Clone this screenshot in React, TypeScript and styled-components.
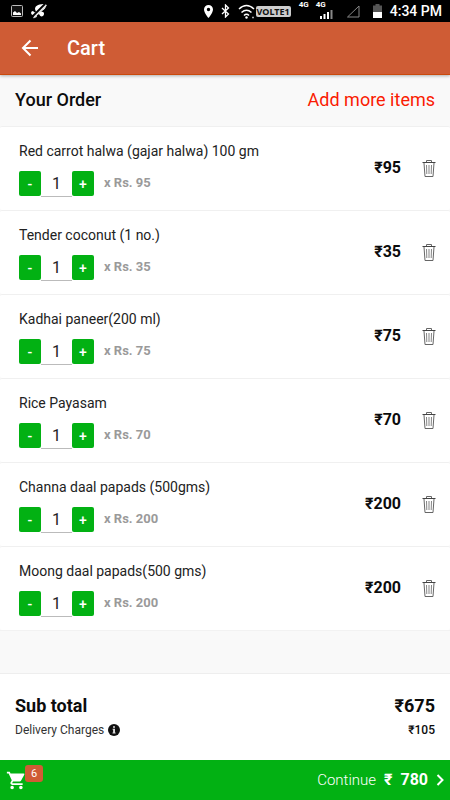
import React, { useState } from "react";
import styled, { createGlobalStyle } from "styled-components";

const green = "#02b113";
const orange = "#cf5c35";

const GlobalStyle = createGlobalStyle`
  *, *::before, *::after { box-sizing: border-box; }
  body {
    margin: 0;
    background: #f9f9f9;
    color: #0c0c0c;
    font-family: Roboto, "Noto Sans", sans-serif;
  }
  button, input { font-family: inherit; margin: 0; padding: 0; border: 0; }
  button { cursor: pointer; }
`;

const Screen = styled.div`
  display: flex;
  flex-direction: column;
  min-height: 100vh;
`;

const StatusBar = styled.div`
  display: flex;
  align-items: center;
  justify-content: space-between;
  height: 22px;
  padding: 0 8px 0 11px;
  background: #000;
  color: #fff;
`;

const StatusGroup = styled.div<{ $gap: number }>`
  display: flex;
  align-items: center;
  gap: ${(p) => p.$gap}px;

  svg { display: block; }
`;

const Volte = styled.span`
  padding: 0 1px;
  border-radius: 2px;
  background: #ccc;
  color: #111;
  font: 700 9px/11px "Noto Sans", sans-serif;
`;

const Network = styled.span`
  align-self: flex-start;
  font-size: 8px;
  font-weight: 700;
  line-height: 10px;
`;

const SignalStack = styled.div`
  display: flex;
  flex-direction: column;
  align-self: flex-start;
  width: 17px;

  svg { align-self: flex-end; }
`;

const SignalGroup = styled.div`
  display: flex;
  align-items: center;
  gap: 7px;
  height: 22px;
`;

const Clock = styled.time`
  font-size: 14px;
  font-weight: 500;
  line-height: 20px;
`;

const AppBar = styled.header`
  position: relative;
  display: flex;
  align-items: center;
  gap: 28px;
  height: 53px;
  padding: 0 21px;
  background: ${orange};
  border-bottom: 1px solid #cb4a0c;
  box-shadow: 0 1px 3px rgba(0, 0, 0, 0.3);
  color: #fff;
`;

const IconButton = styled.button`
  display: flex;
  background: none;
  color: inherit;
`;

const PageTitle = styled.h1`
  margin: 0;
  font-size: 20px;
  font-weight: 500;
  line-height: 24px;
`;

const OrderHeader = styled.div`
  display: flex;
  align-items: center;
  justify-content: space-between;
  height: 51px;
  padding: 0 15px 2px;
`;

const SectionTitle = styled.h2`
  margin: 0;
  font-size: 18px;
  font-weight: 500;
  line-height: 24px;
`;

const AddLink = styled.a`
  color: #fa1b02;
  font-size: 18px;
  line-height: 24px;
  text-decoration: none;
`;

const ItemList = styled.ul`
  margin: 0;
  padding: 0;
  list-style: none;
  border-bottom: 1px solid #f2f2f2;
`;

const Item = styled.li`
  display: flex;
  align-items: center;
  height: 84px;
  padding: 0 14px 0 19px;
  background: #fff;
  border-top: 1px solid #f0f0f0;
  border-radius: 2px;
`;

const ItemInfo = styled.div`
  flex: 1;
  min-width: 0;
`;

const ItemName = styled.div`
  font-size: 14px;
  line-height: 20px;
  color: #222;
`;

const QuantityRow = styled.div`
  display: flex;
  align-items: center;
  margin-top: 10px;
`;

const StepButton = styled.button`
  width: 22px;
  height: 25px;
  border-radius: 2px;
  background: ${green};
  color: #fff;
  font-size: 14px;
  font-weight: 500;
  line-height: 24px;
`;

const QuantityInput = styled.input`
  width: 31px;
  height: 26px;
  padding-top: 1px;
  background: #fff;
  border-bottom: 1px solid #bbb;
  border-radius: 0;
  color: #222;
  font-size: 16px;
  text-align: center;
  outline: none;
`;

const UnitPrice = styled.span`
  margin-left: 10px;
  padding-bottom: 2px;
  color: #9a9a9a;
  font-size: 13px;
  font-weight: 700;
  line-height: 20px;
`;

const LineTotal = styled.span`
  margin-right: 21px;
  padding-bottom: 2px;
  font-size: 16px;
  font-weight: 700;
  line-height: 20px;
`;

const Summary = styled.section`
  display: flex;
  flex-direction: column;
  gap: 2px;
  height: 87px;
  margin-top: auto;
  padding: 20px 15px 0;
  background: #fff;
  border-top: 1px solid #eee;
`;

const SummaryRow = styled.div<{ $large?: boolean }>`
  display: flex;
  align-items: center;
  justify-content: space-between;
  font-size: ${(p) => (p.$large ? 18 : 12)}px;
  font-weight: ${(p) => (p.$large ? 700 : 400)};
  line-height: ${(p) => (p.$large ? 24 : 20)}px;
`;

const ChargeLabel = styled.span`
  display: flex;
  align-items: center;
  gap: 4px;
  color: #333;
`;

const Amount = styled.span`
  font-weight: 500;
`;

const CheckoutBar = styled.footer`
  display: flex;
  align-items: center;
  justify-content: space-between;
  height: 40px;
  padding: 0 6px;
  background: ${green};
  color: #fff;
`;

const CartButton = styled(IconButton)`
  position: relative;
`;

const Badge = styled.span`
  position: absolute;
  left: 19px;
  top: -5px;
  width: 18px;
  height: 17px;
  border-radius: 3px;
  background: ${orange};
  color: #fff;
  font-size: 11px;
  line-height: 18px;
  text-align: center;
`;

const ContinueButton = styled.button`
  display: flex;
  align-items: center;
  gap: 8px;
  background: none;
  color: #fff;
  font-size: 16px;
  line-height: 24px;
`;

const ContinueLabel = styled.span`
  font-size: 15px;
  font-weight: 300;
`;

const Strong = styled.strong`
  font-weight: 700;
`;

const BackIcon = () => (
  <svg width="18" height="18" viewBox="0 0 18 18" fill="none" stroke="currentColor" strokeWidth="2">
    <path d="M17 9H3M9.500 1.500 2 9l7.500 7.500" />
  </svg>
);

const TrashIcon = () => (
  <svg width="14" height="18" viewBox="0 0 14 18" fill="none" stroke="#666" strokeWidth="1">
    <path d="M.5 2.500h13" stroke="#444" />
    <path d="M4.500 2V.5h5V2M2 3l1 13.500h8L12 3" />
    <path d="M4.500 5l.3 9M7 5v9M9.500 5l-.3 9" strokeWidth=".8" />
  </svg>
);

const CartIcon = () => (
  <svg width="21" height="21" viewBox="0 0 24 24" fill="currentColor">
    <path d="M7 18c-1.100 0-2 .9-2 2s.9 2 2 2 2-.9 2-2-.9-2-2-2zM1 2v2h2l3.600 7.590-1.350 2.450C4.520 15.370 5.480 17 7 17h12v-2H7.420c-.14 0-.25-.11-.25-.25l.03-.12.900-1.630h7.450c.75 0 1.410-.41 1.750-1.030l3.580-6.490A1 1 0 0 0 20 4H5.210l-.94-2H1zm16 16c-1.100 0-2 .9-2 2s.9 2 2 2 2-.9 2-2-.9-2-2-2z" />
  </svg>
);

const InfoIcon = () => (
  <svg width="12" height="12" viewBox="0 0 12 12">
    <circle cx="6" cy="6" r="6" fill="#111" />
    <path d="M5 2.300h2v1.500H5zM4.600 4.700H7v3.700h.6v1H4.500v-1h.6V5.700h-.5z" fill="#ddd" />
  </svg>
);

const ChevronIcon = () => (
  <svg width="8" height="12" viewBox="0 0 8 12" fill="none" stroke="currentColor" strokeWidth="2">
    <path d="M1.500 1 6.500 6l-5 5" />
  </svg>
);

const PictureIcon = () => (
  <svg width="12" height="12" viewBox="0 0 12 12">
    <rect x=".5" y=".5" width="11" height="11" rx="1" fill="#111" stroke="#bbb" />
    <path d="M2 10V7.500L4 6l2 2 2-1 2 1.500V10z" fill="#fff" />
  </svg>
);

const MutedIcon = () => (
  <svg width="16" height="15" viewBox="0 0 16 15">
    <path d="M4 5C4 1 9 0 14 0c2 1 1 5-3 7l-1 1c3-1 4 2 2 4-2 1-3 0-4-2l-2 1c0 3-2 3-3 2 0-1 0-2-1-2-3-1-2-4 0-4 1 1 2 2 3 1z" fill="#fff" />
    <path d="M14 0 1 13" stroke="#000" strokeWidth="2" />
    <path d="M15.500 1 2.500 14" stroke="#ddd" strokeWidth="1.200" />
  </svg>
);

const PinIcon = () => (
  <svg width="9" height="13" viewBox="0 0 9 13">
    <path fillRule="evenodd" d="M4.500 0A4.500 4.500 0 0 0 0 4.500C0 8 4.500 13 4.500 13S9 8 9 4.500A4.500 4.500 0 0 0 4.500 0zm0 2.800a1.700 1.700 0 1 1 0 3.400 1.700 1.700 0 0 1 0-3.400z" fill="#fff" />
  </svg>
);

const BluetoothIcon = () => (
  <svg width="9" height="14" viewBox="0 0 9 14" fill="none" stroke="#fff" strokeWidth="1.300">
    <path d="M1 4l6.500 6L4.500 13V1l3 3L1 10" />
  </svg>
);

const WifiIcon = () => (
  <svg width="17" height="15" viewBox="0 0 17 15" fill="none" stroke="#fff" strokeWidth="1.500">
    <path d="M1 5Q8.500-2 16 5M3.500 8.500Q8.500 4 13.500 8.500M6 11.500q2.500-2.500 5 0" />
    <circle cx="8.500" cy="13.500" r="1.200" fill="#fff" stroke="none" />
    <path d="M14 13.500h2" stroke="#aaa" />
  </svg>
);

const BarsIcon = () => (
  <svg width="13" height="9" viewBox="0 0 13 9">
    <path d="M0 6h2v3H0zM3.500 4h2v5h-2zM7 2h2v7H7z" fill="#fff" />
    <path d="M10.500 0h2v9h-2z" fill="#888" />
  </svg>
);

const NoSignalIcon = () => (
  <svg width="14" height="13" viewBox="0 0 14 13" fill="none" stroke="#888">
    <path d="M1.500 12 13 1v11z" />
  </svg>
);

const BatteryIcon = () => (
  <svg width="9" height="14" viewBox="0 0 9 14">
    <path d="M2.500 0h4v1.500H9V8H0V1.500h2.500z" fill="#555" />
    <path d="M0 8h9v6H0z" fill="#fff" />
  </svg>
);

const products = [
  { name: "Red carrot halwa (gajar halwa) 100 gm", price: 95 },
  { name: "Tender coconut (1 no.)", price: 35 },
  { name: "Kadhai paneer(200 ml)", price: 75 },
  { name: "Rice Payasam", price: 70 },
  { name: "Channa daal papads (500gms)", price: 200 },
  { name: "Moong daal papads(500 gms)", price: 200 },
];

const deliveryCharge = 105;

export default function App() {
  const [items, setItems] = useState(products.map((p) => ({ ...p, quantity: 1 })));
  const subTotal = items.reduce((sum, item) => sum + item.price * item.quantity, 0);

  const setQuantity = (name: string, quantity: number) =>
    setItems((list) =>
      list.map((item) => (item.name === name ? { ...item, quantity: Math.max(1, quantity || 1) } : item))
    );
  const remove = (name: string) => setItems((list) => list.filter((item) => item.name !== name));

  return (
    <Screen>
      <GlobalStyle />
      <StatusBar>
        <StatusGroup $gap={8}>
          <PictureIcon />
          <MutedIcon />
        </StatusGroup>
        <StatusGroup $gap={8}>
          <PinIcon />
          <BluetoothIcon />
          <StatusGroup $gap={1}>
            <WifiIcon />
            <Volte>VOLTE1</Volte>
          </StatusGroup>
          <StatusGroup $gap={13}>
            <SignalGroup>
              <Network>4G</Network>
              <SignalStack>
                <Network>4G</Network>
                <BarsIcon />
              </SignalStack>
            </SignalGroup>
            <NoSignalIcon />
            <BatteryIcon />
          </StatusGroup>
          <Clock>4:34 PM</Clock>
        </StatusGroup>
      </StatusBar>

      <AppBar>
        <IconButton type="button" aria-label="Back">
          <BackIcon />
        </IconButton>
        <PageTitle>Cart</PageTitle>
      </AppBar>

      <OrderHeader>
        <SectionTitle>Your Order</SectionTitle>
        <AddLink href="#menu">Add more items</AddLink>
      </OrderHeader>

      <ItemList>
        {items.map((item) => (
          <Item key={item.name}>
            <ItemInfo>
              <ItemName>{item.name}</ItemName>
              <QuantityRow>
                <StepButton
                  type="button"
                  aria-label={`Decrease ${item.name}`}
                  onClick={() => setQuantity(item.name, item.quantity - 1)}
                >
                  -
                </StepButton>
                <QuantityInput
                  type="text"
                  inputMode="numeric"
                  aria-label={`Quantity of ${item.name}`}
                  value={item.quantity}
                  onChange={(e) => setQuantity(item.name, Number(e.target.value))}
                />
                <StepButton
                  type="button"
                  aria-label={`Increase ${item.name}`}
                  onClick={() => setQuantity(item.name, item.quantity + 1)}
                >
                  +
                </StepButton>
                <UnitPrice>x Rs. {item.price}</UnitPrice>
              </QuantityRow>
            </ItemInfo>
            <LineTotal>₹{item.price * item.quantity}</LineTotal>
            <IconButton type="button" aria-label={`Remove ${item.name}`} onClick={() => remove(item.name)}>
              <TrashIcon />
            </IconButton>
          </Item>
        ))}
      </ItemList>

      <Summary>
        <SummaryRow $large>
          <span>Sub total</span>
          <span>₹{subTotal}</span>
        </SummaryRow>
        <SummaryRow>
          <ChargeLabel>
            Delivery Charges <InfoIcon />
          </ChargeLabel>
          <Amount>₹{deliveryCharge}</Amount>
        </SummaryRow>
      </Summary>

      <CheckoutBar>
        <CartButton type="button" aria-label="Cart">
          <CartIcon />
          <Badge>{items.length}</Badge>
        </CartButton>
        <ContinueButton type="button">
          <ContinueLabel>Continue</ContinueLabel>
          <Strong>₹</Strong>
          <Strong>{subTotal + deliveryCharge}</Strong>
          <ChevronIcon />
        </ContinueButton>
      </CheckoutBar>
    </Screen>
  );
}
